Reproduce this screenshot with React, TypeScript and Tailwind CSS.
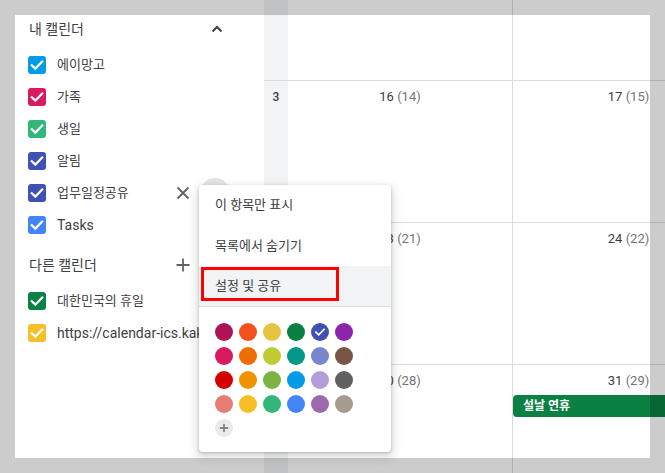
import React from "react";

const Check = ({ size = 18 }: { size?: number }) => (
  <svg width={size} height={size} viewBox="0 0 18 18" fill="none">
    <polyline points="3.8,9.3 7.3,12.6 14.2,5.6" stroke="white" strokeWidth="2.2" strokeLinecap="square" />
  </svg>
);

const Box = ({ cls }: { cls: string }) => (
  <div className={`w-[18px] h-[18px] rounded-[3px] shrink-0 flex items-center justify-center ${cls}`}>
    <Check />
  </div>
);

const XIcon = () => (
  <svg width="14" height="14" viewBox="0 0 14 14" fill="none">
    <path d="M1.5 1.5 L12.5 12.5 M12.5 1.5 L1.5 12.5" stroke="#5f6368" strokeWidth="1.8" />
  </svg>
);

const PlusIcon = () => (
  <svg width="14" height="14" viewBox="0 0 14 14" fill="none">
    <path d="M7 0.5 V13.5 M0.5 7 H13.5" stroke="#5f6368" strokeWidth="1.8" />
  </svg>
);

const Chevron = () => (
  <svg width="12" height="8" viewBox="0 0 12 8" fill="none">
    <polyline points="1.5,6.5 6,2 10.5,6.5" stroke="#3c4043" strokeWidth="2" />
  </svg>
);

const myCals = [
  { name: "에이망고", cls: "bg-[#039be5]" },
  { name: "가족", cls: "bg-[#d81b60]" },
  { name: "생일", cls: "bg-[#33b679]" },
  { name: "알림", cls: "bg-[#3f51b5]" },
];

const colorRows = [
  ["bg-[#ad1457]", "bg-[#f4511e]", "bg-[#e4c441]", "bg-[#0b8043]", "bg-[#3f51b5]", "bg-[#8e24aa]"],
  ["bg-[#d81b60]", "bg-[#ef6c00]", "bg-[#c0ca33]", "bg-[#009688]", "bg-[#7986cb]", "bg-[#795548]"],
  ["bg-[#d50000]", "bg-[#f09300]", "bg-[#7cb342]", "bg-[#039be5]", "bg-[#b39ddb]", "bg-[#616161]"],
  ["bg-[#e67c73]", "bg-[#f6bf26]", "bg-[#33b679]", "bg-[#4285f4]", "bg-[#9e69af]", "bg-[#a79b8e]"],
];

const DayNum = ({ n, p }: { n: string; p: string }) => (
  <div className="pt-2 text-center text-[13px] leading-4 whitespace-nowrap">
    <span className="text-[#3c4043]">{n}</span>{" "}
    <span className="text-[#70757a]">{p}</span>
  </div>
);

export default function App() {
  return (
    <div className="relative w-[665px] h-[473px] overflow-hidden bg-white flex font-[Roboto,'Noto_Sans_CJK_KR',sans-serif]">
      {/* Sidebar */}
      <div className="w-[264px] shrink-0 flex flex-col pt-[9px] text-[#3c4043]">
        <div className="h-10 flex items-center pl-[29px] pr-[35px]">
          <span className="flex-1 text-[14px]">내 캘린더</span>
          <span className="w-6 h-6 flex items-center justify-center">
            <Chevron />
          </span>
        </div>
        {myCals.map((c) => (
          <div key={c.name} className="h-8 flex items-center pl-[28px]">
            <Box cls={c.cls} />
            <span className="ml-[11px] text-[13px]">{c.name}</span>
          </div>
        ))}
        <div className="h-8 flex items-center pl-[28px] pr-[34px]">
          <Box cls="bg-[#3f51b5]" />
          <span className="ml-[11px] flex-1 text-[13px]">업무일정공유</span>
          <span className="w-6 h-6 flex items-center justify-center">
            <XIcon />
          </span>
          <span className="ml-[5px] w-[30px] h-[30px] rounded-full bg-[#e4e4e4]" />
        </div>
        <div className="h-8 flex items-center pl-[28px]">
          <Box cls="bg-[#4285f4]" />
          <span className="ml-[11px] text-[14px]">Tasks</span>
        </div>
        <div className="mt-1 h-10 flex items-center pl-[29px] pr-[69px]">
          <span className="flex-1 text-[14px]">다른 캘린더</span>
          <span className="w-6 h-6 flex items-center justify-center">
            <PlusIcon />
          </span>
        </div>
        <div className="h-8 flex items-center pl-[28px]">
          <Box cls="bg-[#0b8043]" />
          <span className="ml-[11px] text-[13px]">대한민국의 휴일</span>
        </div>
        <div className="h-8 flex items-center pl-[28px] whitespace-nowrap">
          <Box cls="bg-[#f6bf26]" />
          <span className="ml-[11px] text-[14px]">https://calendar-ics.kakao.com/</span>
        </div>
      </div>

      {/* Month grid */}
      <div className="flex-1 overflow-hidden">
        <div className="w-[480px] flex flex-col">
          <div className="h-[81px] flex border-b border-[#dadce0]">
            <div className="w-6 shrink-0 bg-[#f1f3f4]" />
            <div className="w-[224px] shrink-0" />
            <div className="w-[232px] shrink-0 border-l border-[#dadce0]" />
          </div>
          {[
            ["3", "16", "(14)", "17", "(15)"],
            ["", "23", "(21)", "24", "(22)"],
          ].map((r) => (
            <div key={r[1]} className="h-[142px] flex border-b border-[#dadce0]">
              <div className="w-6 shrink-0 bg-[#f1f3f4] pt-2 text-center text-[12px] leading-4 font-medium text-[#3c4043]">
                {r[0]}
              </div>
              <div className="w-[224px] shrink-0">
                <DayNum n={r[1]} p={r[2]} />
              </div>
              <div className="w-[232px] shrink-0 border-l border-[#dadce0]">
                <DayNum n={r[3]} p={r[4]} />
              </div>
            </div>
          ))}
          <div className="h-[142px] flex">
            <div className="w-6 shrink-0 bg-[#f1f3f4]" />
            <div className="w-[224px] shrink-0">
              <DayNum n="30" p="(28)" />
            </div>
            <div className="w-[232px] shrink-0 border-l border-[#dadce0]">
              <DayNum n="31" p="(29)" />
              <div className="mt-[6px] h-[22px] rounded-l-[4px] bg-[#0b8043] flex items-center pl-[10px] text-white text-[12px] font-bold">
                설날 연휴
              </div>
            </div>
          </div>
        </div>
      </div>

      {/* Context menu */}
      <div className="absolute left-[199px] top-[185px] w-[192px] bg-white rounded-[4px] shadow-[0_1px_3px_rgba(60,64,67,0.3),0_4px_8px_3px_rgba(60,64,67,0.15)] text-[#3c4043] text-[13px]">
        <div className="h-10 flex items-center pl-4">이 항목만 표시</div>
        <div className="h-[41px] flex items-center pl-4">목록에서 숨기기</div>
        <div className="h-10 flex items-center pl-4 bg-[#f1f3f4]">설정 및 공유</div>
        <div className="h-px bg-[#dadce0]" />
        <div className="pt-4 pb-[15px] pl-4 flex flex-col gap-[6px]">
          {colorRows.map((row, i) => (
            <div key={i} className="flex gap-[6px]">
              {row.map((c, j) => (
                <div key={j} className={`w-[18px] h-[18px] rounded-full flex items-center justify-center ${c}`}>
                  {i === 0 && j === 4 ? <Check size={14} /> : null}
                </div>
              ))}
            </div>
          ))}
          <div className="w-[18px] h-[18px] rounded-full bg-[#e8eaed] flex items-center justify-center">
            <svg width="10" height="10" viewBox="0 0 10 10" fill="none">
              <path d="M5 1 V9 M1 5 H9" stroke="#80868b" strokeWidth="1.8" />
            </svg>
          </div>
        </div>
        <div className="absolute left-[2px] top-[82px] w-[138px] h-[34px] border-[3px] border-[#ff0000]" />
      </div>

      {/* Dim frame */}
      <div className="absolute inset-0 z-50 pointer-events-none border-[15px] border-black/20" />
    </div>
  );
}
